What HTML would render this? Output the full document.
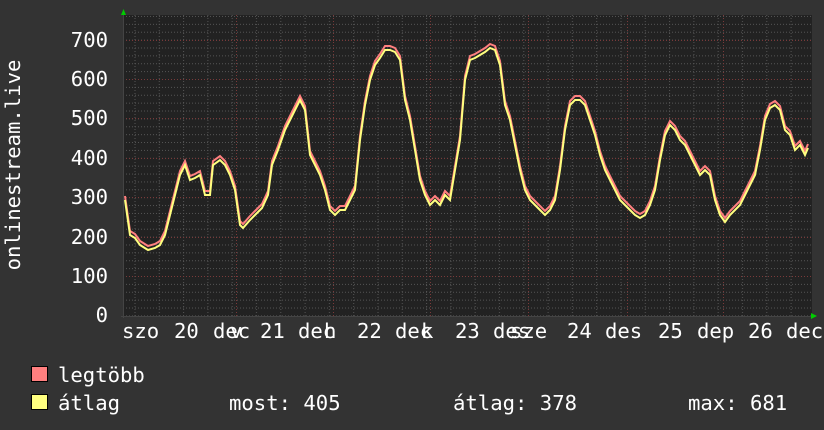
<!DOCTYPE html>
<html><head><meta charset="utf-8"><style>
html,body{margin:0;padding:0;background:#333;}
svg{display:block}
text{font-family:"DejaVu Sans Mono","Liberation Mono",monospace;font-size:20.6px;fill:#fff}
</style></head><body>
<svg width="824" height="430" viewBox="0 0 824 430" xmlns="http://www.w3.org/2000/svg">
<defs>
<pattern id="hm" x="0" y="0.2" width="824" height="7.88" patternUnits="userSpaceOnUse"><line x1="0" y1="0.5" x2="824" y2="0.5" stroke="#555" stroke-width="1" stroke-dasharray="1,2"/></pattern>
<pattern id="vm" x="0.5" y="0" width="24.3" height="430" patternUnits="userSpaceOnUse"><line x1="13" y1="0" x2="13" y2="430" stroke="#555" stroke-width="1" stroke-dasharray="1,2"/></pattern>
</defs>
<rect width="824" height="430" fill="#333"/>
<rect x="123" y="15" width="689" height="301" fill="#222"/>
<rect x="123" y="15" width="689" height="301" fill="url(#hm)"/>
<rect x="123" y="15" width="689" height="301" fill="url(#vm)"/>
<g stroke="#7a3a3a" stroke-width="1" stroke-dasharray="1,2">
<line x1="123" y1="40.5" x2="812" y2="40.5"/><line x1="123" y1="79.5" x2="812" y2="79.5"/><line x1="123" y1="118.5" x2="812" y2="118.5"/><line x1="123" y1="158.5" x2="812" y2="158.5"/><line x1="123" y1="197.5" x2="812" y2="197.5"/><line x1="123" y1="237.5" x2="812" y2="237.5"/><line x1="123" y1="276.5" x2="812" y2="276.5"/>
<line x1="236.5" y1="15" x2="236.5" y2="316"/><line x1="333.5" y1="15" x2="333.5" y2="316"/><line x1="430.5" y1="15" x2="430.5" y2="316"/><line x1="528.5" y1="15" x2="528.5" y2="316"/><line x1="627.5" y1="15" x2="627.5" y2="316"/><line x1="723.5" y1="15" x2="723.5" y2="316"/>
</g>
<line x1="123.5" y1="14" x2="123.5" y2="318" stroke="#444" stroke-width="1"/>
<line x1="121" y1="316.5" x2="812" y2="316.5" stroke="#444" stroke-width="1"/>
<polygon points="121,15 126,15 123.5,9" fill="#0c0"/>
<polygon points="811,313 811,319 817,316" fill="#0c0"/>
<polyline fill="none" stroke="#ff7f7f" stroke-width="2" transform="translate(0,-4)" points="125,200 130,235 135,238 140,245 148,250 155,248 160,245 165,235 170,215 175,195 180,175 185,165 190,180 195,178 200,175 205,195 210,195 213,165 220,160 225,165 230,175 235,190 240,225 243,228 250,220 255,215 262,208 268,195 272,165 278,150 285,130 290,120 295,110 300,100 305,110 310,155 315,165 320,175 325,190 330,210 335,215 340,210 345,210 350,200 355,190 360,140 365,105 370,80 375,65 380,58 385,50 390,50 395,52 400,60 405,100 410,120 415,150 420,180 425,195 430,205 435,200 440,205 445,195 450,200 455,170 460,140 465,80 470,60 475,58 480,55 485,52 490,48 495,50 500,65 505,105 510,120 515,145 520,170 525,190 530,200 535,205 540,210 545,215 550,210 555,200 560,170 565,130 570,105 575,100 580,100 585,105 590,120 595,135 600,155 605,170 610,180 615,190 620,200 625,205 630,210 635,215 640,218 645,215 650,205 655,190 660,160 665,135 670,125 675,130 680,140 685,145 690,155 695,165 700,175 705,170 710,175 715,200 720,215 725,222 730,215 735,210 740,205 745,195 750,185 755,175 760,150 765,120 770,108 775,105 780,110 785,130 790,135 795,150 800,145 805,155 808,148"/>
<polyline fill="none" stroke="#ffff7f" stroke-width="2" points="125,200 130,235 135,238 140,245 148,250 155,248 160,245 165,235 170,215 175,195 180,175 185,165 190,180 195,178 200,175 205,195 210,195 213,165 220,160 225,165 230,175 235,190 240,225 243,228 250,220 255,215 262,208 268,195 272,165 278,150 285,130 290,120 295,110 300,100 305,110 310,155 315,165 320,175 325,190 330,210 335,215 340,210 345,210 350,200 355,190 360,140 365,105 370,80 375,65 380,58 385,50 390,50 395,52 400,60 405,100 410,120 415,150 420,180 425,195 430,205 435,200 440,205 445,195 450,200 455,170 460,140 465,80 470,60 475,58 480,55 485,52 490,48 495,50 500,65 505,105 510,120 515,145 520,170 525,190 530,200 535,205 540,210 545,215 550,210 555,200 560,170 565,130 570,105 575,100 580,100 585,105 590,120 595,135 600,155 605,170 610,180 615,190 620,200 625,205 630,210 635,215 640,218 645,215 650,205 655,190 660,160 665,135 670,125 675,130 680,140 685,145 690,155 695,165 700,175 705,170 710,175 715,200 720,215 725,222 730,215 735,210 740,205 745,195 750,185 755,175 760,150 765,120 770,108 775,105 780,110 785,130 790,135 795,150 800,145 805,155 808,148"/>
<g text-anchor="end">
<text x="108" y="47">700</text><text x="108" y="86">600</text><text x="108" y="125">500</text><text x="108" y="165">400</text><text x="108" y="204">300</text><text x="108" y="244">200</text><text x="108" y="283">100</text><text x="108" y="322">0</text>
</g>
<text transform="translate(20,165) rotate(-90)" text-anchor="middle">onlinestream.live</text>
<g>
<text x="122" y="338">szo</text><text x="174" y="338">20</text><text x="213" y="338">dec</text><text x="230" y="338">v</text>
<text x="260" y="338">21</text><text x="298" y="338">dec</text><text x="324" y="338">h</text>
<text x="357" y="338">22</text><text x="395" y="338">dec</text><text x="421" y="338">k</text>
<text x="455" y="338">23</text><text x="493" y="338">des</text><text x="510" y="338">sze</text>
<text x="567" y="338">24</text><text x="605" y="338">des</text>
<text x="658" y="338">25</text><text x="697" y="338">dep</text>
<text x="748" y="338">26</text><text x="786" y="338">dec</text>
</g>
<rect x="31.5" y="366.5" width="16" height="15" fill="#ff7f7f" stroke="#000" stroke-width="1"/>
<rect x="31.5" y="394.5" width="16" height="15" fill="#ffff7f" stroke="#000" stroke-width="1"/>
<text x="58" y="382">legtöbb</text>
<text x="58" y="410">átlag</text>
<text x="229" y="410">most: 405</text>
<text x="453" y="410">átlag: 378</text>
<text x="688" y="410">max: 681</text>
</svg>
</body></html>
